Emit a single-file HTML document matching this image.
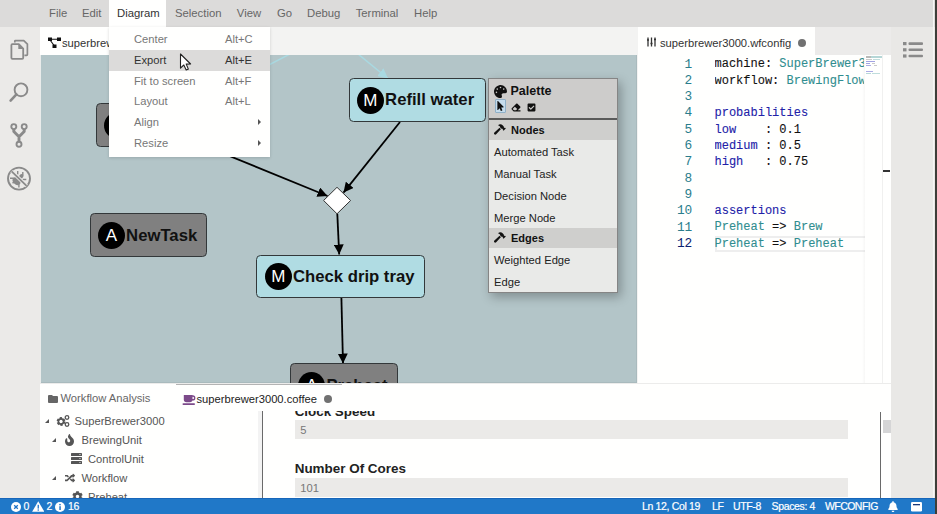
<!DOCTYPE html>
<html><head><meta charset="utf-8">
<style>
*{box-sizing:border-box;margin:0;padding:0}
html,body{width:937px;height:514px;overflow:hidden;background:#f3f3f2;font-family:"Liberation Sans",sans-serif;font-size:11.2px;color:#333}
.a{position:absolute}
#menubar{left:0;top:0;width:937px;height:27px;background:#dcdbda}
.mi{position:absolute;top:6px;color:#666;font-size:11.3px;line-height:14px}
#activity{left:0;top:27px;width:40px;height:471px;background:#ebeae8}
#dtabbar{left:40px;top:27px;width:597px;height:28px;background:#f3f3f2}
#dtab{left:40px;top:27px;width:180px;height:28px;background:#fffffe;overflow:hidden}
#canvas{left:40px;top:55px;width:597px;height:327.6px;background:#b3c5c8;overflow:hidden;box-shadow:inset -1px -1px 0 rgba(0,0,0,.05)}
#etabbar{left:638px;top:27px;width:253px;height:28px;background:#ecebea}
#etab{left:638px;top:27px;width:177px;height:28px;background:#fffffe}
#editor{left:638px;top:55px;width:253px;height:328px;background:#fffffe}
#rpanel{left:891px;top:27px;width:46px;height:471px;background:#e9e8e6}
#bottom{left:40px;top:383px;width:851px;height:115px;background:#fffffe}
#status{left:0;top:498px;width:937px;height:16px;background:#2078c8;border-top:1px solid #1766ba;color:#fff}
.code{position:absolute;font-family:"Liberation Mono",monospace;font-size:12px;line-height:16.3px;white-space:pre;-webkit-text-stroke:0.1px currentColor}
.ln{position:absolute;left:0;width:54.3px;text-align:right;color:#2a7d8c;font-family:"Liberation Mono",monospace;font-size:12.8px;line-height:16.3px}
.k{color:#111}.v{color:#2f8d8f}.b{color:#2121a8}
.node{position:absolute;border:1.4px solid #33383a;border-radius:4.5px;white-space:nowrap}
.node.blue{background:#b0dce3}
.node.gray{background:#808080}
.circ{position:absolute;left:7.4px;top:50%;margin-top:-13.2px;width:27px;height:27px;border-radius:50%;background:#000;color:#fff;font-size:17px;line-height:27px;text-align:center}
.nt{position:absolute;left:35.6px;top:50%;margin-top:-9px;font-weight:bold;font-size:16.7px;line-height:20px;color:#111}
#dmenu{left:109px;top:27px;width:161px;height:130px;background:#fffffe;box-shadow:0 1px 3px rgba(0,0,0,.15)}
.dmi{position:absolute;left:0;width:161px;height:20.8px;color:#777;font-size:11.2px;line-height:20.8px}
.dmi span:first-child{position:absolute;left:25px}
.dmi .sc{position:absolute;left:116px}
.dmi.hl{background:#dcdbda;color:#333}
.dmi .arr{position:absolute;left:149px;top:7px;width:0;height:0;border-left:3.5px solid #555;border-top:3.5px solid transparent;border-bottom:3.5px solid transparent}
#palette{left:488px;top:77.5px;width:130px;height:215px;background:#e9eae8;border:1px solid #858585;box-shadow:3px 4px 10px rgba(0,0,0,.28)}
#phead{position:absolute;left:0;top:0;width:128px;height:41.6px;background:#cdcccb;border-bottom:2px solid #5a5a5a}
.psec{position:absolute;left:0;width:128px;height:20px;background:#cfcfcd;font-weight:bold;font-size:11px;line-height:20px;color:#111}
.psec span{position:absolute;left:22px}
.psec .ham{position:absolute;left:4.5px;top:4.2px}
.pit{position:absolute;left:5px;height:21.95px;font-size:11.2px;line-height:23.2px;color:#222}
.tri{position:absolute;width:0;height:0;border-right:4px solid #555;border-top:4px solid transparent}
.st{position:absolute;top:1.4px;font-size:10.5px;line-height:13px;color:#fff;letter-spacing:-0.35px;-webkit-text-stroke:0.2px #fff}
</style></head><body>
<div id="menubar" class="a">
  <span class="mi" style="left:49px">File</span>
  <span class="mi" style="left:82px">Edit</span>
  <span class="a" style="left:109px;top:0;width:57px;height:27px;background:#fffffe"></span>
  <span class="mi" style="left:117px;color:#333">Diagram</span>
  <span class="mi" style="left:175px">Selection</span>
  <span class="mi" style="left:236.8px">View</span>
  <span class="mi" style="left:277px">Go</span>
  <span class="mi" style="left:307px">Debug</span>
  <span class="mi" style="left:355.7px">Terminal</span>
  <span class="mi" style="left:414px">Help</span>
</div>
<div id="activity" class="a">
<svg class="a" style="left:0;top:0" width="40" height="200" viewBox="0 27 40 200">
 <g fill="none" stroke="#8a8a8a" stroke-linejoin="round">
  <path d="M14.8,42.5 V41.2 Q14.8,40.6 15.4,40.6 H23.8 L27.4,44.2 V54.6 Q27.4,55.4 26.6,55.4 H24.4" stroke-width="1.7"/>
  <path d="M11.4,45.2 Q11.4,44.2 12.4,44.2 H18.8 L23.2,48.6 V57.8 Q23.2,58.8 22.2,58.8 H12.4 Q11.4,58.8 11.4,57.8 Z" stroke-width="1.8"/>
  <circle cx="21" cy="89.8" r="6.4" stroke-width="1.9"/>
  <circle cx="13.8" cy="126.6" r="2.5" stroke-width="1.9"/>
  <circle cx="24.2" cy="126.6" r="2.5" stroke-width="1.9"/>
  <circle cx="19" cy="144.3" r="2.5" stroke-width="1.9"/>
 </g>
 <path d="M18.3,44.2 V49 H23.2 Z" fill="#8a8a8a"/>
 <path d="M16.4,94.4 L10.6,100.6" stroke="#8a8a8a" stroke-width="2.6" stroke-linecap="round"/>
 <path d="M13.8,129 V131.5 L19,136.8 L24.2,131.5 V129 M19,136 V141.8" fill="none" stroke="#8a8a8a" stroke-width="2.9" stroke-linejoin="round"/>
 <circle cx="19" cy="178.6" r="11" fill="none" stroke="#8a8a8a" stroke-width="1.9"/>
 <g fill="#8a8a8a">
  <ellipse cx="16.6" cy="181.2" rx="3.4" ry="4.4" transform="rotate(-45 16.6 181.2)"/>
  <ellipse cx="21.2" cy="176.4" rx="2.6" ry="2" transform="rotate(-45 21.2 176.4)"/>
 </g>
 <path d="M10,178.3 H14 M17.7,171 V174.5 M22.8,172 V175.5 M22.5,179.5 H26.3 M18.9,183.5 V187.4 M12.5,183 L14.5,182" stroke="#8a8a8a" stroke-width="1.4" fill="none"/>
 <path d="M11.6,171.3 L26.6,185.9" stroke="#ebeae8" stroke-width="3.6"/>
 <path d="M11.6,171.3 L26.6,185.9" stroke="#8a8a8a" stroke-width="1.8"/>
</svg>
</div>
<div id="dtabbar" class="a"></div>
<div id="dtab" class="a">
 <svg class="a" style="left:7.5px;top:9.5px" width="13" height="12" viewBox="0 0 13 12"><rect x="0" y="0.5" width="4" height="3.5" fill="#111"/><rect x="9" y="0.5" width="4" height="3.5" fill="#111"/><rect x="4.5" y="7.5" width="4" height="3.5" fill="#111"/><path d="M3,2.2 H10 M2,3 L6.5,9" stroke="#111" stroke-width="1.1" fill="none"/></svg>
 <span class="a" style="left:22px;top:9.5px;font-size:11.2px;line-height:13px;color:#333">superbrewer3000.wfdiagram</span>
</div>
<div id="canvas" class="a">
<svg class="a" style="left:0;top:0" width="598" height="328" viewBox="40 55 598 328">
 <defs>
  <marker id="ab" viewBox="0 0 10 10" refX="10" refY="5" markerWidth="10" markerHeight="10" markerUnits="userSpaceOnUse" orient="auto"><path d="M0,0 L10,5 L0,10 z" fill="#000"/></marker>
  <marker id="al" viewBox="0 0 10 10" refX="10" refY="5" markerWidth="10" markerHeight="10" markerUnits="userSpaceOnUse" orient="auto"><path d="M0,0 L10,5 L0,10 z" fill="#a9d9e1"/></marker>
 </defs>
 <line x1="230" y1="85.2" x2="290" y2="54" stroke="#a9d9e1" stroke-width="1.5"/>
 <line x1="358" y1="54" x2="388" y2="78.5" stroke="#a9d9e1" stroke-width="1.5" marker-end="url(#al)"/>
 <line x1="200" y1="144" x2="327.5" y2="196" stroke="#000" stroke-width="1.8" marker-end="url(#ab)"/>
 <line x1="400" y1="122" x2="343.5" y2="192.6" stroke="#000" stroke-width="1.8" marker-end="url(#ab)"/>
 <line x1="337.3" y1="213.8" x2="339.2" y2="254.5" stroke="#000" stroke-width="1.8" marker-end="url(#ab)"/>
 <line x1="341.4" y1="298" x2="343" y2="363.5" stroke="#000" stroke-width="1.8" marker-end="url(#ab)"/>
 <path d="M337,187.3 L350.6,200.5 L337,213.8 L323.6,200.5 Z" fill="#fff" stroke="#333" stroke-width="1"/>
</svg>
<div class="node gray" style="left:55.8px;top:47.8px;width:130px;height:44px"><span class="circ">C</span><span class="nt">Cleanup</span></div>
<div class="node blue" style="left:308.5px;top:22.7px;width:137.5px;height:44.3px"><span class="circ">M</span><span class="nt" style="margin-top:-10px">Refill water</span></div>
<div class="node gray" style="left:49.5px;top:157.5px;width:117.5px;height:44.5px"><span class="circ">A</span><span class="nt">NewTask</span></div>
<div class="node blue" style="left:216.4px;top:199.9px;width:169px;height:43px"><span class="circ">M</span><span class="nt">Check drip tray</span></div>
<div class="node gray" style="left:249.8px;top:308.3px;width:108px;height:44px"><span class="circ">A</span><span class="nt">Preheat</span></div>
</div>
<div id="palette" class="a">
 <div id="phead">
  <svg class="a" style="left:5px;top:6px" width="13" height="13" viewBox="0 0 512 512"><path fill="#111" d="M204.3 5C104.9 24.4 24.8 104.3 5.2 203.4c-37 187 131.7 326.4 258.8 306.7 41.2-6.4 61.4-54.6 42.5-91.7-23.1-45.4 9.9-98.4 60.9-98.4h79.7c35.8 0 64.8-29.6 64.9-65.3C511.5 97.1 368.1-26.9 204.3 5zM96 320c-17.7 0-32-14.3-32-32s14.3-32 32-32 32 14.3 32 32-14.3 32-32 32zm32-128c-17.7 0-32-14.3-32-32s14.3-32 32-32 32 14.3 32 32-14.3 32-32 32zm128-64c-17.7 0-32-14.3-32-32s14.3-32 32-32 32 14.3 32 32-14.3 32-32 32zm128 64c-17.7 0-32-14.3-32-32s14.3-32 32-32 32 14.3 32 32-14.3 32-32 32z"/></svg>
  <span class="a" style="left:21.5px;top:5px;font-weight:bold;font-size:12.5px;line-height:15px;color:#111">Palette</span>
  <span class="a" style="left:5.5px;top:20.5px;width:11px;height:14px;background:#c6dcec;border:1px solid #8fb0c8;border-radius:1px"></span>
  <svg class="a" style="left:8px;top:22.5px" width="7" height="10" viewBox="0 0 320 512"><path fill="#111" d="M302.2 329.1H196.1l55.8 136c3.9 9.4-.6 20-9.4 24l-49.2 21.4c-9.1 4-19.2-.6-23-9.7l-53-129.1-86.7 89.1C19.2 472.6 0 463.3 0 446.5V17.1C0-.6 20.7-9.2 32.5 3.1l284.6 292.8c11.5 11.1 3 33.2-14.9 33.2z"/></svg>
  <svg class="a" style="left:21.5px;top:24px" width="10" height="9" viewBox="0 0 512 512"><path fill="#111" d="M497.9 273.9c18.7-18.7 18.7-49.1 0-67.9l-160-160c-18.7-18.7-49.1-18.7-67.9 0l-256 256c-18.7 18.7-18.7 49.1 0 67.9l96 96A48 48 0 0 0 144 480h356c6.6 0 12-5.4 12-12v-40c0-6.6-5.4-12-12-12H355.9l142-142.1zM190.1 210.1l137.3 137.3L255.9 416H144l-80-80 126.1-125.9z"/></svg>
  <svg class="a" style="left:38px;top:24px" width="9" height="9" viewBox="0 0 448 512"><path fill="#111" d="M400 480H48c-26.5 0-48-21.5-48-48V80c0-26.5 21.5-48 48-48h352c26.5 0 48 21.5 48 48v352c0 26.5-21.5 48-48 48zm-204.7-98.1l184-184c6.2-6.2 6.2-16.4 0-22.6l-22.6-22.6c-6.2-6.2-16.4-6.2-22.6 0L184 302.7l-70.1-70.1c-6.2-6.2-16.4-6.2-22.6 0l-22.6 22.6c-6.2 6.2-6.2 16.4 0 22.6l104 104c6.2 6.3 16.4 6.3 22.6 0z"/></svg>
 </div>
 <div class="psec" style="top:41.6px"><svg class="ham" width="13" height="11" viewBox="0 0 640 512"><path fill="#111" d="M571.31 193.94l-22.63-22.63c-6.25-6.25-16.38-6.25-22.63 0l-11.31 11.31-28.9-28.9c5.63-21.31.36-44.9-16.35-61.61l-45.25-45.25c-62.48-62.48-163.79-62.48-226.28 0l90.51 45.25v18.75c0 16.97 6.74 33.25 18.75 45.25l49.14 49.14c16.71 16.71 40.3 21.98 61.61 16.35l28.9 28.9-11.31 11.31c-6.25 6.25-6.25 16.38 0 22.63l22.63 22.63c6.25 6.25 16.38 6.25 22.63 0l90.51-90.51c6.23-6.24 6.23-16.37-.02-22.62zm-286.72-15.2c-3.7-3.7-6.84-7.79-9.85-11.95L19.64 404.96c-25.57 23.88-26.26 64.19-1.53 88.93s65.05 24.05 88.93-1.53l238.13-255.07c-3.96-2.91-7.9-5.87-11.44-9.41l-49.14-49.14z"/></svg><span>Nodes</span></div>
 <div class="pit" style="top:62.5px">Automated Task</div>
 <div class="pit" style="top:84.45px">Manual Task</div>
 <div class="pit" style="top:106.4px">Decision Node</div>
 <div class="pit" style="top:128.35px">Merge Node</div>
 <div class="psec" style="top:149.3px"><svg class="ham" width="13" height="11" viewBox="0 0 640 512"><path fill="#111" d="M571.31 193.94l-22.63-22.63c-6.250-6.25-16.38-6.25-22.63 0l-11.31 11.31-28.9-28.9c5.63-21.31.36-44.9-16.35-61.61l-45.25-45.25c-62.48-62.48-163.79-62.480-226.28 0l90.51 45.25v18.75c0 16.97 6.74 33.25 18.75 45.25l49.14 49.14c16.71 16.71 40.3 21.98 61.610 16.35l28.9 28.9-11.31 11.31c-6.25 6.25-6.25 16.38 0 22.63l22.63 22.63c6.25 6.25 16.38 6.25 22.63 0l90.51-90.51c6.23-6.24 6.23-16.37-.02-22.620zm-286.72-15.2c-3.7-3.7-6.84-7.790-9.85-11.95L19.64 404.96c-25.57 23.88-26.26 64.19-1.53 88.93s65.05 24.05 88.93-1.53l238.13-255.07c-3.96-2.91-7.9-5.87-11.44-9.41l-49.14-49.14z"/></svg><span>Edges</span></div>
 <div class="pit" style="top:170.3px">Weighted Edge</div>
 <div class="pit" style="top:192.1px">Edge</div>
</div>
<div class="a" style="left:40px;top:55px;width:1px;height:328px;background:#eaeceb"></div>
<div id="dmenu" class="a">
 <div class="dmi" style="top:2px"><span>Center</span><span class="sc">Alt+C</span></div>
 <div class="dmi hl" style="top:22.8px"><span>Export</span><span class="sc">Alt+E</span></div>
 <div class="dmi" style="top:43.6px"><span>Fit to screen</span><span class="sc">Alt+F</span></div>
 <div class="dmi" style="top:64.4px"><span>Layout</span><span class="sc">Alt+L</span></div>
 <div class="dmi" style="top:85.2px"><span>Align</span><span class="arr"></span></div>
 <div class="dmi" style="top:106px"><span>Resize</span><span class="arr"></span></div>
</div>
<svg class="a" style="left:178.8px;top:53.4px" width="14" height="20" viewBox="0 0 14 20"><path d="M1.5,1 L1.5,15.2 L4.8,12 L7.2,17 L9.4,16.1 L7.2,11.1 L11.6,11 Z" fill="#fff" stroke="#222" stroke-width="1.1" stroke-linejoin="round"/></svg>
<div id="etabbar" class="a"></div>
<div id="etab" class="a">
 <svg class="a" style="left:8.5px;top:10px" width="9" height="10" viewBox="0 0 9 10"><path d="M1,0.5 V9.5 M4.5,0.5 V9.5 M8,0.5 V9.5" stroke="#333" stroke-width="1.3"/><path d="M0,3 H2 M3.5,6.5 H5.5 M7,2.5 H9" stroke="#333" stroke-width="1.6"/></svg>
 <span class="a" style="left:22px;top:9.5px;font-size:11.2px;line-height:13px;color:#333">superbrewer3000.wfconfig</span>
 <span class="a" style="left:159.5px;top:11.5px;width:8px;height:8px;border-radius:50%;background:#717171"></span>
</div>
<div id="editor" class="a">
 <div class="a" style="left:76.5px;top:181px;width:150px;height:16px;border:2px solid #eeeeee;border-right:none"></div>
 <div class="a" style="left:0;top:1.5px;width:54px">
  <div class="ln" style="top:0">1</div><div class="ln" style="top:16.3px">2</div><div class="ln" style="top:32.6px">3</div><div class="ln" style="top:48.9px">4</div><div class="ln" style="top:65.2px">5</div><div class="ln" style="top:81.5px">6</div><div class="ln" style="top:97.8px">7</div><div class="ln" style="top:114.1px">8</div><div class="ln" style="top:130.4px">9</div><div class="ln" style="top:146.7px">10</div><div class="ln" style="top:163px">11</div><div class="ln" style="top:179.3px;color:#0b216f">12</div>
 </div>
 <div class="code" style="left:76.5px;top:1.4px;width:149px;overflow:hidden"><span class="k">machine: </span><span class="v">SuperBrewer3000</span>
<span class="k">workflow: </span><span class="v">BrewingFlow</span>

<span class="b">probabilities</span>
<span class="b">low</span><span class="k">    : 0.1</span>
<span class="b">medium</span><span class="k"> : 0.5</span>
<span class="b">high</span><span class="k">   : 0.75</span>


<span class="b">assertions</span>
<span class="v">Preheat</span><span class="k"> => </span><span class="v">Brew</span>
<span class="v">Preheat</span><span class="k"> => </span><span class="v">Preheat</span></div>
 <div class="a" style="left:224px;top:0;width:3px;height:328px;background:linear-gradient(to right,rgba(0,0,0,0),rgba(0,0,0,.03))"></div>
 <div class="a" style="left:227px;top:0;width:18px;height:328px;background:#fffffe"></div>
 <div class="a" style="left:227.5px;top:1px;width:5px;height:1.5px;background:#666;opacity:.45"></div>
 <div class="a" style="left:233px;top:1px;width:11px;height:1.5px;background:#2f8d8f;opacity:.35"></div>
 <div class="a" style="left:228px;top:3.5px;width:6px;height:1.2px;background:#666;opacity:.35"></div>
 <div class="a" style="left:235px;top:3.5px;width:7px;height:1.2px;background:#2f8d8f;opacity:.3"></div>
 <div class="a" style="left:228px;top:6px;width:9px;height:1.2px;background:#3030c0;opacity:.45"></div>
 <div class="a" style="left:228px;top:8px;width:4px;height:1.2px;background:#3030c0;opacity:.45"></div>
 <div class="a" style="left:234px;top:8px;width:3px;height:1.2px;background:#666;opacity:.35"></div>
 <div class="a" style="left:228px;top:10px;width:5px;height:1.2px;background:#3030c0;opacity:.4"></div>
 <div class="a" style="left:236px;top:10px;width:3px;height:1.2px;background:#666;opacity:.35"></div>
 <div class="a" style="left:228px;top:16px;width:7px;height:1.2px;background:#3030c0;opacity:.4"></div>
 <div class="a" style="left:228px;top:18px;width:5px;height:1.2px;background:#2f8d8f;opacity:.35"></div>
 <div class="a" style="left:234px;top:18px;width:8px;height:1.2px;background:#2f8d8f;opacity:.3"></div>
 <div class="a" style="left:244px;top:0;width:1px;height:328px;background:#f0f0ef"></div>
 <div class="a" style="left:245px;top:114.5px;width:7px;height:2px;background:#333"></div>
</div>
<div id="rpanel" class="a">
 <svg class="a" style="left:11.5px;top:14.5px" width="21" height="16" viewBox="0 0 21 16"><rect x="0" y="0" width="3.5" height="3.2" fill="#8a8a8a"/><rect x="0" y="6.2" width="3.5" height="3.2" fill="#8a8a8a"/><rect x="0" y="12.4" width="3.5" height="3.2" fill="#8a8a8a"/><rect x="5.5" y="0.3" width="14.5" height="2.6" rx="1" fill="#8a8a8a"/><rect x="5.5" y="6.5" width="14.5" height="2.6" rx="1" fill="#8a8a8a"/><rect x="5.5" y="12.7" width="14.5" height="2.6" rx="1" fill="#8a8a8a"/></svg>
 
</div>
<div id="bottom" class="a">
 <div class="a" style="left:0;top:0;width:851px;height:1px;background:#ececeb"></div>
 <svg class="a" style="left:7.5px;top:12px" width="10" height="8" viewBox="0 0 10 8"><path d="M0,1 Q0,0 1,0 H4 L5,1 H9 Q10,1 10,2 V7 Q10,8 9,8 H1 Q0,8 0,7 Z" fill="#666"/></svg>
 <span class="a" style="left:20.5px;top:8.5px;font-size:11.2px;line-height:13px;color:#666">Workflow Analysis</span>
 <div class="tri" style="left:5.3px;top:36px"></div>
 <svg class="a" style="left:16px;top:32px" width="14" height="12" viewBox="0 0 14 12"><circle cx="5" cy="6.5" r="3.2" fill="none" stroke="#555" stroke-width="2.4" stroke-dasharray="2 1.4"/><circle cx="5" cy="6.5" r="2.6" fill="none" stroke="#555" stroke-width="1.6"/><circle cx="11" cy="2.5" r="1.8" fill="none" stroke="#555" stroke-width="1.3"/><circle cx="11" cy="9.5" r="1.8" fill="none" stroke="#555" stroke-width="1.3"/></svg>
 <span class="a" style="left:34.5px;top:32px;font-size:11.2px;line-height:13px;color:#555">SuperBrewer3000</span>
 <div class="tri" style="left:12.3px;top:55px"></div>
 <svg class="a" style="left:25px;top:51px" width="9" height="12" viewBox="0 0 384 512"><path fill="#555" d="M216 23.86c0-23.8-30.65-32.77-44.15-13.04C48 191.85 224 200 224 288c0 35.63-29.11 64.46-64.85 63.99-35.17-.45-63.15-29.77-63.15-64.94v-85.51c0-21.7-26.47-32.23-41.43-16.5C27.8 213.16 0 261.33 0 320c0 105.87 86.13 192 192 192s192-86.13 192-192c0-170.29-168-193-168-296.14z"/></svg>
 <span class="a" style="left:41.5px;top:51px;font-size:11.2px;line-height:13px;color:#555">BrewingUnit</span>
 <svg class="a" style="left:31px;top:70.3px" width="11" height="11" viewBox="0 0 11 11"><rect x="0" y="0" width="11" height="3" rx=".6" fill="#555"/><rect x="0" y="4" width="11" height="3" rx=".6" fill="#555"/><rect x="0" y="8" width="11" height="3" rx=".6" fill="#555"/><circle cx="9" cy="1.5" r=".6" fill="#fff"/><circle cx="9" cy="5.5" r=".6" fill="#fff"/><circle cx="9" cy="9.5" r=".6" fill="#fff"/></svg>
 <span class="a" style="left:48px;top:70px;font-size:11.2px;line-height:13px;color:#555">ControlUnit</span>
 <div class="tri" style="left:12.3px;top:93px"></div>
 <svg class="a" style="left:23.5px;top:90px" width="12" height="10" viewBox="0 0 512 512"><path fill="#555" d="M504.971 359.029c9.373 9.373 9.373 24.569 0 33.941l-80 79.984c-15.01 15.01-40.971 4.49-40.971-16.971V416h-58.785a12.004 12.004 0 0 1-8.773-3.812l-70.556-75.596 53.333-57.143L352 336h32v-39.981c0-21.438 25.943-31.998 40.971-16.971l80 79.981zM12 176h84l52.781 56.551 53.333-57.143-70.556-75.596A11.999 11.999 0 0 0 122.785 96H12c-6.627 0-12 5.373-12 12v56c0 6.627 5.373 12 12 12zm372 0v39.984c0 21.46 25.961 31.98 40.971 16.971l80-79.984c9.373-9.373 9.373-24.569 0-33.941l-80-79.981C409.943 24.021 384 34.582 384 56.019V96h-58.785a12.004 12.004 0 0 0-8.773 3.812L96 336H12c-6.627 0-12 5.373-12 12v56c0 6.627 5.373 12 12 12h110.785c3.326 0 6.503-1.381 8.773-3.812L384 176z"/></svg>
 <span class="a" style="left:41.5px;top:89px;font-size:11.2px;line-height:13px;color:#555">Workflow</span>
 <svg class="a" style="left:31.5px;top:108px" width="11" height="11" viewBox="0 0 512 512"><path fill="#555" d="M487.4 315.7l-42.6-24.6c4.3-23.2 4.3-47 0-70.2l42.6-24.6c4.9-2.8 7.100-8.600 5.500-14-11.100-35.600-30-67.800-54.700-94.600-3.800-4.100-10-5.100-14.800-2.300L380.800 110c-17.900-15.400-38.500-27.300-60.800-35.100V25.800c0-5.600-3.900-10.500-9.400-11.700-36.700-8.200-74.300-7.800-109.200 0-5.500 1.200-9.400 6.100-9.400 11.700V75c-22.200 7.900-42.800 19.800-60.800 35.100L88.700 85.500c-4.900-2.800-11-1.900-14.800 2.300-24.700 26.700-43.600 58.900-54.700 94.600-1.700 5.400.600 11.200 5.500 14L67.300 221c-4.300 23.200-4.300 47 0 70.200l-42.600 24.600c-4.900 2.800-7.100 8.600-5.500 14 11.100 35.600 30 67.800 54.700 94.600 3.800 4.100 10 5.100 14.800 2.300l42.600-24.600c17.900 15.400 38.500 27.300 60.800 35.100v49.200c0 5.600 3.900 10.500 9.400 11.700 36.700 8.200 74.300 7.800 109.200 0 5.500-1.200 9.400-6.100 9.400-11.700v-49.200c22.200-7.900 42.800-19.800 60.800-35.100l42.600 24.600c4.900 2.800 11 1.900 14.800-2.300 24.700-26.700 43.600-58.900 54.700-94.600 1.500-5.500-.7-11.300-5.600-14.100zM256 336c-44.100 0-80-35.900-80-80s35.900-80 80-80 80 35.900 80 80-35.900 80-80 80z"/></svg>
 <span class="a" style="left:48px;top:108px;font-size:11.2px;line-height:13px;color:#555">Preheat</span>
 <div class="a" style="left:218px;top:28px;width:4px;height:87px;background:#f3f3f3"></div>
 <div class="a" style="left:221.5px;top:28px;width:1.2px;height:87px;background:#6a6a6a"></div>
 <div class="a" style="left:222.7px;top:28px;width:628px;height:87px;background:#fffffe;overflow:hidden">
  <span class="a" style="left:32px;top:-6.8px;font-weight:bold;font-size:13.4px;line-height:16px;color:#222">Clock Speed</span>
  <div class="a" style="left:32.3px;top:9px;width:553px;height:19px;background:#ebeae8"></div>
  <span class="a" style="left:37.5px;top:12.5px;font-size:11.2px;line-height:13px;color:#777">5</span>
  <span class="a" style="left:32px;top:50.4px;font-weight:bold;font-size:13.45px;line-height:16px;color:#222">Number Of Cores</span>
  <div class="a" style="left:32.3px;top:67px;width:553px;height:18.8px;background:#ebeae8"></div>
  <span class="a" style="left:37.5px;top:70.5px;font-size:11.2px;line-height:13px;color:#777">101</span>
  <div class="a" style="left:617px;top:1px;width:1.2px;height:86px;background:#6a6a6a"></div>
  <div class="a" style="left:620px;top:9px;width:8px;height:12.5px;background:#d5d5d6"></div>
 </div>
 <div class="a" style="left:135.5px;top:1px;width:166px;height:27px;background:#fffffe;border-top:1.2px solid #b4b4b4"></div>
 <svg class="a" style="left:142px;top:11px" width="14" height="12" viewBox="0 0 14 12"><path d="M1.8,1 H10.5 V5.5 Q10.5,8.2 7.8,8.2 H4.5 Q1.8,8.2 1.8,5.5 Z" fill="#7c4a8a"/><circle cx="10.8" cy="3.9" r="1.9" fill="none" stroke="#7c4a8a" stroke-width="1.4"/><rect x="0.5" y="9.2" width="12.5" height="1.7" rx=".85" fill="#7c4a8a"/></svg>
 <span class="a" style="left:156.5px;top:9.5px;font-size:11.2px;line-height:13px;color:#222">superbrewer3000.coffee</span>
 <span class="a" style="left:284px;top:11.5px;width:8px;height:8px;border-radius:50%;background:#717171"></span>
</div>
<div id="status" class="a">
 <svg class="a" style="left:10.5px;top:2.8px" width="10" height="10" viewBox="0 0 10 10"><circle cx="5" cy="5" r="5" fill="#fff"/><path d="M3.2,3.2 L6.8,6.8 M6.8,3.2 L3.2,6.8" stroke="#1e73c7" stroke-width="1.3"/></svg>
 <span class="st" style="left:23.5px">0</span>
 <svg class="a" style="left:31.5px;top:2.3px" width="12.5" height="11" viewBox="0 0 12.5 11"><path d="M6.25,0.3 L12.4,10.8 H0.1 Z" fill="#fff"/><rect x="5.6" y="3.8" width="1.3" height="3.8" fill="#1e73c7"/><rect x="5.6" y="8.4" width="1.3" height="1.3" fill="#1e73c7"/></svg>
 <span class="st" style="left:46.5px">2</span>
 <svg class="a" style="left:54.5px;top:2.8px" width="10" height="10" viewBox="0 0 10 10"><circle cx="5" cy="5" r="5" fill="#fff"/><rect x="4.3" y="4.2" width="1.5" height="3.8" fill="#1e73c7"/><circle cx="5" cy="2.6" r=".85" fill="#1e73c7"/></svg>
 <span class="st" style="left:68px">16</span>
 <span class="st" style="left:642px">Ln 12, Col 19</span>
 <span class="st" style="left:712px">LF</span>
 <span class="st" style="left:733px">UTF-8</span>
 <span class="st" style="left:771.5px">Spaces: 4</span>
 <span class="st" style="left:825px;letter-spacing:-0.55px">WFCONFIG</span>
 <svg class="a" style="left:888px;top:2.3px" width="10" height="11" viewBox="0 0 448 512"><path fill="#fff" d="M224 512c35.32 0 63.97-28.65 63.97-64H160.03c0 35.35 28.65 64 63.97 64zm215.39-149.71c-19.32-20.76-55.47-51.99-55.47-154.290 0-77.700-54.480-139.900-127.940-155.160V32c0-17.670-14.320-32-31.980-32s-31.980 14.330-31.980 32v20.840C118.560 68.100 64.080 130.300 64.080 208c0 102.300-36.150 133.530-55.470 154.290-6 6.450-8.660 14.160-8.610 21.710.110 16.400 12.980 32 32.100 32h383.800c19.120 0 32-15.600 32.100-32 .050-7.550-2.610-15.270-8.610-21.710z"/></svg>
 <svg class="a" style="left:911px;top:3.3px" width="11" height="9.5" viewBox="0 0 11 9.5"><rect x="0" y="0" width="11" height="9.5" rx="1.3" fill="#fff"/><rect x="2" y="2" width="7" height="1.3" fill="#1a3a7a"/></svg>
</div>
<div class="a" style="left:933px;top:0;width:1px;height:498px;background:#f6f6f4"></div><div class="a" style="left:934.5px;top:0;width:2.5px;height:514px;background:#3e3e39"></div>
</body></html>
